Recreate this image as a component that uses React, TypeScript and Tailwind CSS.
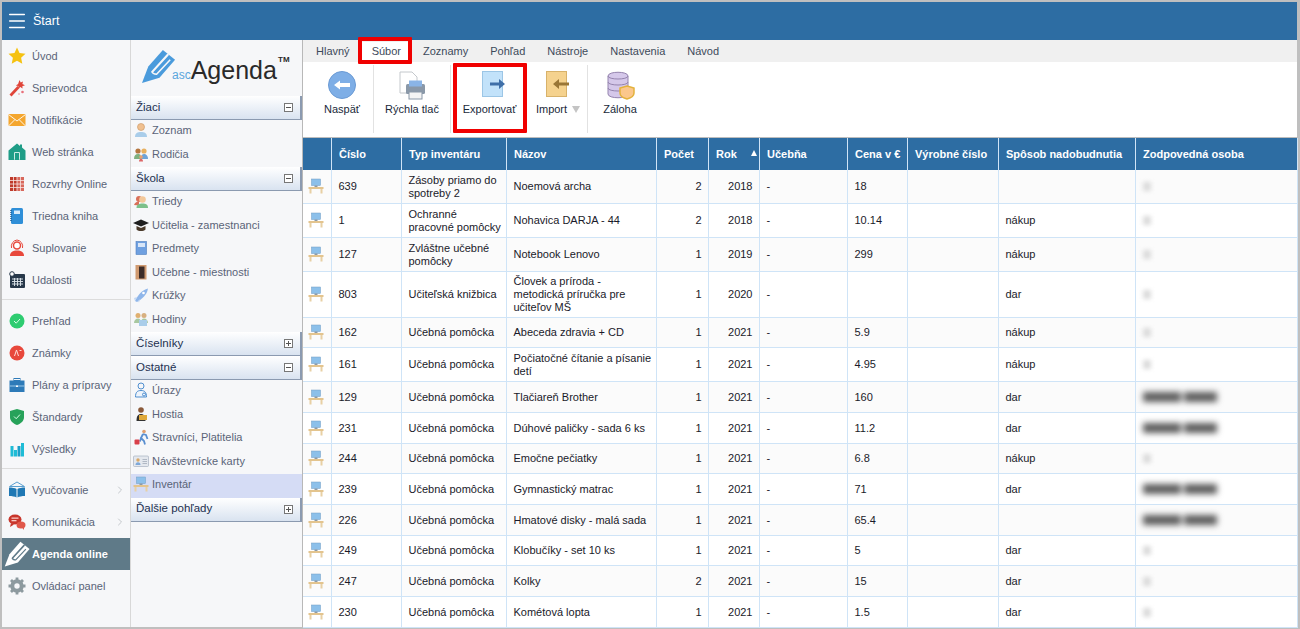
import React from 'react';
import { ChevronRight, Menu } from 'lucide-react';

const font = "font-['Liberation_Sans',Arial,sans-serif]";

function Pencil({ color, cut, className }: { color: string; cut: string; className: string }) {
    return (
        <svg viewBox="0 0 37 37" className={className}>
            <path d="M1 35 L7.500 18 L22.500 1 L35 11 L19 29.500 Z" fill={color} />
            <path d="M12 23 L27.500 6" stroke={cut} strokeWidth="2.200" strokeLinecap="round" />
            <path d="M11 23 Q12 26 16 26 L30 11" stroke={cut} strokeWidth="1.600" fill="none" />
        </svg>
    );
}

const icons: Record<string, React.ReactNode> = {
    star: <path d="M9 .5l2.500 5.500 6 .7-4.400 4 1.200 6L9 13.800l-5.300 2.900 1.200-6-4.400-4 6-.7z" fill="#f5c211" />,
    wand: <g><path d="M1.500 15.500L9.500 7l2 2-8 8.500z" fill="#e0453a" /><path d="M11.500 1l1.200 2.500 2.300-1-.6 2.600 2.600 1.100-2.700 1 .3 2.300-2.300-1.500-1.800 1.600-.2-2.600-2.500-.6 2.300-1.400z" fill="#e0453a" /><circle cx="14.500" cy="13" r="1.300" fill="#e8707a" /><circle cx="11" cy="15" r=".7" fill="#e8707a" /></g>,
    mail: <g><rect x=".5" y="3" width="17" height="12" fill="#f4a62e" /><path d="M.5 3.500l8.500 6.500 8.500-6.500M.5 15l6.500-6.500M17.500 15L11 8.500" stroke="#fff" strokeWidth=".9" fill="none" /></g>,
    home: <g><path d="M9 .5l3 2.500V1.500h2v3l3.500 3V17H.5V7.500z" fill="#1f9d87" /><rect x="6" y="9" width="6" height="8" rx="1" fill="#cdeae4" /><rect x="7" y="10" width="4" height="7" fill="#1f9d87" /></g>,
    grid: <g><rect x="2" y="2" width="7" height="14" fill="#bf3a2b" /><rect x="9" y="2" width="7" height="14" fill="#d8685c" /><path d="M5.500 2v14M9 2v14M12.500 2v14M2 5.500h14M2 9h14M2 12.500h14" stroke="#f8e6e3" strokeWidth=".8" /></g>,
    book: <g><rect x="3" y="1" width="12" height="16" rx="1.500" fill="#2f8fd8" /><rect x="6" y="3.500" width="6" height="3.500" fill="#d8ecfb" /><path d="M3 3v12" stroke="#1c5f96" strokeWidth="1.500" strokeDasharray="1 1" /></g>,
    sub: <g><circle cx="9" cy="6.500" r="3.500" fill="#fff" stroke="#e8483c" strokeWidth="1.500" /><path d="M2 17c0-4 3-5.500 7-5.500s7 1.500 7 5.500z" fill="#e8483c" /><path d="M3.500 9A6.500 6.500 0 0 1 9 1a6.500 6.500 0 0 1 5.500 8" stroke="#e8483c" fill="none" /></g>,
    cal: <g><rect x="2" y="3" width="15" height="14" rx="1" fill="#27384a" /><path d="M4 8h11M4 10.500h11M4 13h11M6.500 7v8M9.500 7v8M12.500 7v8" stroke="#dfe6ec" strokeWidth=".9" /><circle cx="4" cy="3" r="2.300" fill="#fff" stroke="#27384a" /></g>,
    ok: <g><circle cx="9" cy="9" r="7.500" fill="#2ecc71" /><path d="M6 9l2.200 2.200L12 7" stroke="#d8ffe6" fill="none" /></g>,
    grade: <g><circle cx="9" cy="9" r="7.500" fill="#e8483c" /><path d="M6.500 12L8.500 6l2 6M11.500 6.500h2" stroke="#ffdcd8" fill="none" /></g>,
    brief: <g><rect x="1.500" y="4.500" width="15" height="11.500" fill="#2d7ab8" /><rect x="6" y="2.500" width="6" height="2" fill="none" stroke="#2d7ab8" /><path d="M1.500 10h15" stroke="#9cc8e8" /><rect x="8" y="9.500" width="2" height="1.500" fill="#fff" /></g>,
    shield: <g><path d="M9 1l7 2v6c0 4-3 6.500-7 8-4-1.500-7-4-7-8V3z" fill="#27a25a" /><path d="M6 8.500l2.200 2.200L12 6.500" stroke="#d8ffe6" fill="none" /></g>,
    bars: <g><rect x="2.500" y="6" width="3" height="10.500" fill="#1ebcd6" /><rect x="6" y="10" width="3" height="6.500" fill="#1ebcd6" /><rect x="9.500" y="6" width="3" height="10.500" fill="#1a9fc9" /><rect x="13" y="3" width="3" height="13.500" fill="#1ebcd6" /></g>,
    open: <g><path d="M9 1l7.500 4.500H1.500z" fill="none" stroke="#5a9fd0" /><path d="M1 6.500c3 0 6 .5 7.500 1.500v8.500C7 15.500 4 15 1 15zM17 6.500c-3 0-6 .5-7.500 1.500v8.500c1.500-1 4.500-1.500 7.500-1.500z" fill="#1f78b4" /></g>,
    chat: <g><ellipse cx="7" cy="6.500" rx="6.500" ry="5" fill="#c8352b" /><path d="M3 10l-1 4 4-2.500z" fill="#c8352b" /><ellipse cx="13" cy="12" rx="4.500" ry="3.500" fill="#e0574a" /><path d="M14 14.500l2 2.500v-3.500z" fill="#e0574a" /><rect x="3.500" y="4.500" width="7" height="1.300" fill="#f7c9c3" /><rect x="3.500" y="7" width="5" height="1.300" fill="#f7c9c3" /></g>,
    gear: <g><circle cx="9" cy="9" r="4.700" fill="none" stroke="#8d9a9f" strokeWidth="4" /><path d="M9 .5v3M9 14.500v3M.5 9h3M14.500 9h3M3 3l2.200 2.200M12.800 12.800L15 15M15 3l-2.200 2.200M5.200 12.800L3 15" stroke="#8d9a9f" strokeWidth="2.800" /></g>,
};

function Icon({ name, className = "w-[18px] h-[18px]" }: { name: string; className?: string }) {
    return <svg viewBox="0 0 18 18" className={className}>{icons[name]}</svg>;
}

const small: Record<string, React.ReactNode> = {
    person: <g><circle cx="8" cy="5" r="3.500" fill="#f0c090" stroke="#c89460" strokeWidth=".6" /><path d="M2 15c0-4 2.500-5 6-5s6 1 6 5z" fill="#a9cdea" /></g>,
    parents: <g><circle cx="5" cy="5" r="2.600" fill="#b5763f" /><path d="M1 13c0-3.500 1.500-5 4-5s3 1 3 5z" fill="#7fb07f" /><circle cx="11" cy="5" r="2.600" fill="#e8b060" /><path d="M8 13c0-3.500 1-5 3-5s4 1.500 4 5z" fill="#6fa3d8" /><circle cx="8" cy="11" r="1.800" fill="#e8a070" /><path d="M6 15.500c0-2 1-2.500 2-2.500s2 .5 2 2.500z" fill="#d66" /></g>,
    class: <g><circle cx="6" cy="6" r="3" fill="#d9705a" /><path d="M1 12c1-3 3-3.500 5-3.500v4z" fill="#d9705a" /><circle cx="9.500" cy="6.500" r="3.300" fill="#f3c89a" /><path d="M3.500 15c0-3.500 2.500-4.500 6-4.500s5.500 1 5.500 4.500z" fill="#7cc08a" /></g>,
    cap: <g><path d="M0 6l8-3.500L16 6l-8 3.500z" fill="#1e1e1e" /><path d="M3.500 9v3.500c2 2 7 2 9 0V9L8 11z" fill="#4a3a2a" /></g>,
    note: <g><rect x="3" y="1.500" width="10.500" height="13" fill="#6fa0e0" stroke="#4f7fbf" strokeWidth=".6" /><rect x="5" y="3" width="7" height="4" fill="#d8e6f8" /></g>,
    door: <g><rect x="2.500" y="1" width="11" height="14.500" fill="#d09a70" /><rect x="6" y="2.500" width="5.500" height="12" fill="#3c2c28" /></g>,
    rocket: <g><path d="M2 14C5 8 9 3 15 1.500 14 8 9 12 4 15z" fill="#8fb6ea" /><path d="M1 11l3-1-2 4zM5 14l2-2-1 3.500z" fill="#c2d8f3" /><circle cx="10.500" cy="6" r="1.300" fill="#fff" /></g>,
    clock: <g><circle cx="5" cy="4.500" r="2.500" fill="#e0b070" /><circle cx="11" cy="4.500" r="2.500" fill="#d8b080" /><path d="M1 12c0-3 2-4.500 4-4.500S8 9 8 12zM8 12c0-3 1-4.500 3-4.500s4 1.500 4 4.500z" fill="#a8c8a0" /><rect x="6" y="9" width="8" height="6" fill="#a9cdea" /></g>,
    injury: <g><circle cx="8" cy="4" r="3" fill="none" stroke="#4f8fd0" /><path d="M2.500 15c0-5 2-6.500 5.500-6.500s5.500 1.500 5.500 6.500z" fill="#eef4fb" stroke="#4f8fd0" /><circle cx="11" cy="12.500" r="1.500" fill="none" stroke="#4f8fd0" /></g>,
    guest: <g><circle cx="8" cy="4" r="2.800" fill="#8a5a3a" /><path d="M3.500 15c0-5 1.500-7 4.500-7s4.500 2 4.500 7z" fill="#333" /><rect x="6" y="9" width="8" height="5" fill="#e0a93a" /></g>,
    walk: <g><circle cx="11" cy="2.500" r="1.800" fill="#e0a070" /><path d="M10 5l3 1 1.500 4M10 5L8 9l3 3 1 3.500M8 9l-1 3.500" stroke="#5a8fd0" strokeWidth="1.800" fill="none" /><rect x="1.500" y="10.500" width="5" height="5" rx="1" fill="#d9404a" /></g>,
    card: <g><rect x=".5" y="3" width="15" height="10.500" rx="1" fill="#e4e8ee" stroke="#a8b2c0" strokeWidth=".7" /><circle cx="5" cy="7" r="1.700" fill="#d8a868" /><path d="M2.500 12c0-2 1-2.800 2.500-2.800s2.500.8 2.500 2.800z" fill="#7fa8d8" /><path d="M9.500 6.500H14M9.500 8.500H14M9.500 10.500H14" stroke="#b0b8c4" /></g>,
    desk: <g><rect x="3.500" y="1" width="9" height="6.500" fill="#8cc0ea" stroke="#6f9cc4" strokeWidth=".5" /><rect x="6.500" y="7.500" width="3" height="1.500" fill="#8a9aa8" /><rect x=".5" y="9" width="15" height="2" fill="#e3c48e" /><rect x="1.500" y="11" width="2" height="4.500" fill="#e8d0a4" /><rect x="12.500" y="11" width="2" height="4.500" fill="#e8d0a4" /></g>,
};

function SmallIcon({ name }: { name: string }) {
    return <svg viewBox="0 0 16 16" className="w-4 h-4 shrink-0">{small[name]}</svg>;
}

function NavItem({ icon, label, chevron, active }: { icon: React.ReactNode; label: string; chevron?: boolean; active?: boolean }) {
    return (
        <div className={`h-8 flex items-center text-[11px] leading-[13px] ${active ? "bg-[#5f7a88] text-white font-bold" : "text-[#5a6478]"}`}>
            <div className="w-[30px] flex justify-center shrink-0">{icon}</div>
            <span className="flex-1 whitespace-nowrap">{label}</span>
            {chevron && <ChevronRight className="w-[12px] h-[12px] text-[#c4c8cc] mr-[4px]" />}
        </div>
    );
}

function SectionHead({ label, open }: { label: string; open?: boolean }) {
    return (
        <div className="h-[24px] flex items-center justify-between pl-[5px] pr-[7px] bg-gradient-to-b from-white to-[#d9e3f0] border-b border-b-[#8b9ab0] border-r-2 border-r-[#8b9ab0] text-[11.500px] text-[#1d3050]">
            <span>{label}</span>
            <span className="w-[9px] h-[9px] border border-[#777] bg-white flex items-center justify-center relative">
                <span className="w-[5px] h-px bg-[#555]" />
                {!open && <span className="absolute w-px h-[5px] bg-[#555]" />}
            </span>
        </div>
    );
}

function SubItem({ icon, label, active }: { icon: string; label: string; active?: boolean }) {
    return (
        <div className={`h-[23.500px] flex items-center gap-[3px] pl-[2px] pb-[3px] text-[11px] text-[#5a6478] ${active ? "bg-[#d5dcf5]" : ""}`}>
            <span className="w-4 flex justify-center"><SmallIcon name={icon} /></span>
            <span className="whitespace-nowrap">{label}</span>
        </div>
    );
}

function RibbonBtn({ icon, label, arrow, className }: { icon: React.ReactNode; label: string; arrow?: boolean; className: string }) {
    return (
        <div className={`flex flex-col items-center pt-[9px] ${className}`}>
            <div className="h-[30px] flex items-start justify-center">{icon}</div>
            <div className="flex items-center gap-[5px] whitespace-nowrap text-[11px] text-[#1a2a3a] leading-[16px]">
                {label}
                {arrow && <span className="w-0 h-0 border-x-[4px] border-x-transparent border-t-[7px] border-t-[#c4c4c4]" />}
            </div>
        </div>
    );
}

const Sep = () => <div className="w-px h-[68px] mt-[3px] bg-[#e2e2e2] shrink-0" />;

type Row = { h: string; no: string; type: string; name: string; cnt: string; year: string; price: string; how: string; person: number };

const rows: Row[] = [
    { h: "h-[33px]", no: "639", type: "Zásoby priamo do spotreby 2", name: "Noemová archa", cnt: "2", year: "2018", price: "18", how: "", person: 0 },
    { h: "h-[34px]", no: "1", type: "Ochranné pracovné pomôcky", name: "Nohavica DARJA - 44", cnt: "2", year: "2018", price: "10.14", how: "nákup", person: 0 },
    { h: "h-[34px]", no: "127", type: "Zvláštne učebné pomôcky", name: "Notebook Lenovo", cnt: "1", year: "2019", price: "299", how: "nákup", person: 0 },
    { h: "h-[46px]", no: "803", type: "Učiteľská knižbica", name: "Človek a príroda -\nmetodická príručka pre\nučiteľov MŠ", cnt: "1", year: "2020", price: "", how: "dar", person: 0 },
    { h: "h-[30px]", no: "162", type: "Učebná pomôcka", name: "Abeceda zdravia + CD", cnt: "1", year: "2021", price: "5.9", how: "nákup", person: 0 },
    { h: "h-[34px]", no: "161", type: "Učebná pomôcka", name: "Počiatočné čítanie a písanie detí", cnt: "1", year: "2021", price: "4.95", how: "nákup", person: 0 },
    { h: "h-[31px]", no: "129", type: "Učebná pomôcka", name: "Tlačiareň Brother", cnt: "1", year: "2021", price: "160", how: "dar", person: 1 },
    { h: "h-[31px]", no: "231", type: "Učebná pomôcka", name: "Dúhové paličky - sada 6 ks", cnt: "1", year: "2021", price: "11.2", how: "dar", person: 1 },
    { h: "h-[30px]", no: "244", type: "Učebná pomôcka", name: "Emočne pečiatky", cnt: "1", year: "2021", price: "6.8", how: "nákup", person: 0 },
    { h: "h-[31px]", no: "239", type: "Učebná pomôcka", name: "Gymnastický matrac", cnt: "1", year: "2021", price: "71", how: "dar", person: 1 },
    { h: "h-[31px]", no: "226", type: "Učebná pomôcka", name: "Hmatové disky - malá sada", cnt: "1", year: "2021", price: "65.4", how: "", person: 1 },
    { h: "h-[30px]", no: "249", type: "Učebná pomôcka", name: "Klobučíky - set 10 ks", cnt: "1", year: "2021", price: "5", how: "dar", person: 0 },
    { h: "h-[31px]", no: "247", type: "Učebná pomôcka", name: "Kolky", cnt: "2", year: "2021", price: "15", how: "dar", person: 0 },
    { h: "h-[31px]", no: "230", type: "Učebná pomôcka", name: "Kométová lopta", cnt: "1", year: "2021", price: "1.5", how: "dar", person: 0 },
];

const heads = ["", "Číslo", "Typ inventáru", "Názov", "Počet", "Rok", "Učebňa", "Cena v €", "Výrobné číslo", "Spôsob nadobudnutia", "Zodpovedná osoba"];
const widths = ["w-[28px]", "w-[70px]", "w-[105px]", "w-[150px]", "w-[52px]", "w-[51px]", "w-[88px]", "w-[60px]", "w-[91px]", "w-[137px]", "w-[162px]"];

const td = "border-b border-r border-[#cfe4f7] pl-[7px] pr-[1px] pt-[1px] align-middle leading-[13px]";

export default function App() {
    return (
        <div className={`w-[1300px] h-[629px] overflow-hidden bg-[#bfbfbf] pl-[2px] pr-[3px] pt-[2px] pb-[2px] flex flex-col ${font}`}>
            <div className="h-[38px] shrink-0 bg-[#2d6da3] flex items-center text-white">
                <Menu className="w-[22px] h-[22px] ml-[4px]" strokeWidth={1.6} />
                <span className="ml-[5px] text-[12.500px]">Štart</span>
            </div>
            <div className="flex flex-1 min-h-0">
                <div className="w-[129px] shrink-0 bg-[#f6f7f9] border-r border-[#d8d8d8]">
                    <NavItem icon={<Icon name="star" />} label="Úvod" />
                    <NavItem icon={<Icon name="wand" />} label="Sprievodca" />
                    <NavItem icon={<Icon name="mail" />} label="Notifikácie" />
                    <NavItem icon={<Icon name="home" />} label="Web stránka" />
                    <NavItem icon={<Icon name="grid" />} label="Rozvrhy Online" />
                    <NavItem icon={<Icon name="book" />} label="Triedna kniha" />
                    <NavItem icon={<Icon name="sub" />} label="Suplovanie" />
                    <NavItem icon={<Icon name="cal" />} label="Udalosti" />
                    <div className="h-px bg-[#dcdcdc] mt-[3px] mb-[5px]" />
                    <NavItem icon={<Icon name="ok" />} label="Prehľad" />
                    <NavItem icon={<Icon name="grade" />} label="Známky" />
                    <NavItem icon={<Icon name="brief" />} label="Plány a prípravy" />
                    <NavItem icon={<Icon name="shield" />} label="Štandardy" />
                    <NavItem icon={<Icon name="bars" />} label="Výsledky" />
                    <div className="h-px bg-[#dcdcdc] mt-[3px] mb-[5px]" />
                    <NavItem icon={<Icon name="open" />} label="Vyučovanie" chevron />
                    <NavItem icon={<Icon name="chat" />} label="Komunikácia" chevron />
                    <NavItem icon={<Pencil color="#fff" cut="#5f7a88" className="w-[27px] h-[27px]" />} label="Agenda online" active />
                    <NavItem icon={<Icon name="gear" />} label="Ovládací panel" />
                </div>
                <div className="w-[172px] shrink-0 bg-[#f6f7f9] border-r border-[#b8b8b8]">
                    <div className="h-[56px] flex items-end pl-[10px] pb-[12px] relative">
                        <Pencil color="#4a9bdc" cut="#f6f7f9" className="w-[36px] h-[36px] shrink-0 -mb-[1px]" />
                        <span className="text-[12px] text-[#5aa5dd] -ml-[5px] leading-[18px]">asc</span>
                        <span className="text-[25px] leading-[28px] text-[#2a2a2a]">Agenda</span>
                        <span className="absolute left-[147px] top-[16px] text-[8px] font-bold leading-none text-[#2a2a2a]">TM</span>
                    </div>
                    <SectionHead label="Žiaci" open />
                    <SubItem icon="person" label="Zoznam" />
                    <SubItem icon="parents" label="Rodičia" />
                    <SectionHead label="Škola" open />
                    <SubItem icon="class" label="Triedy" />
                    <SubItem icon="cap" label="Učitelia - zamestnanci" />
                    <SubItem icon="note" label="Predmety" />
                    <SubItem icon="door" label="Učebne - miestnosti" />
                    <SubItem icon="rocket" label="Krúžky" />
                    <SubItem icon="clock" label="Hodiny" />
                    <SectionHead label="Číselníky" />
                    <SectionHead label="Ostatné" open />
                    <SubItem icon="injury" label="Úrazy" />
                    <SubItem icon="guest" label="Hostia" />
                    <SubItem icon="walk" label="Stravníci, Platitelia" />
                    <SubItem icon="card" label="Návštevnícke karty" />
                    <SubItem icon="desk" label="Inventár" active />
                    <SectionHead label="Ďalšie pohľady" />
                </div>
                <div className="flex-1 min-w-0 flex flex-col relative">
                    <div className="h-[22px] shrink-0 bg-[#f0f0f0] flex items-end pl-[2px] text-[11px] text-[#3d4a5a]">
                        {["Hlavný", "Súbor", "Zoznamy", "Pohľad", "Nástroje", "Nastavenia", "Návod"].map((t) => (
                            <div key={t} className={`h-[20px] px-[11px] leading-[19px] ${t === "Súbor" ? "bg-white" : ""}`}>{t}</div>
                        ))}
                    </div>
                    <div className="h-[76px] shrink-0 bg-white border-b border-[#bdbdbd] flex">
                        <RibbonBtn className="w-[70px] pl-[8px]" label="Naspäť" icon={
                            <svg viewBox="0 0 28 28" className="w-[28px] h-[28px]">
                                <circle cx="14" cy="14" r="13.500" fill="#7eaee6" stroke="#6a9ad4" />
                                <path d="M6 14l6-4.500V12h10v4H12v2.500z" fill="#fff" />
                            </svg>
                        } />
                        <Sep />
                        <RibbonBtn className="w-[76px]" label="Rýchla tlač" icon={
                            <svg viewBox="0 0 30 30" className="w-[30px] h-[30px]">
                                <path d="M3 1h12l5 5v16H3z" fill="#fff" stroke="#c4c8cc" />
                                <rect x="9" y="13" width="19" height="10" rx="1.500" fill="#8a98a8" />
                                <rect x="12" y="9.500" width="13" height="6" fill="#8ab4e6" />
                                <rect x="12" y="21" width="13" height="7" fill="#f4f4f4" stroke="#8a98a8" />
                            </svg>
                        } />
                        <Sep />
                        <RibbonBtn className="w-[77px]" label="Exportovať" icon={
                            <svg viewBox="0 0 24 26" className="w-[24px] h-[26px] ml-[9px]">
                                <rect x=".500" y=".500" width="20" height="25" fill="#c2e2fa" stroke="#9cc6e6" />
                                <path d="M8 11.500h9V8l6 5-6 5v-3.500H8z" fill="#3f6fa8" />
                            </svg>
                        } />
                        <RibbonBtn className="w-[59px] pl-[1px]" label="Import" arrow icon={
                            <svg viewBox="0 0 24 26" className="w-[24px] h-[26px]">
                                <rect x=".500" y=".500" width="20" height="25" fill="#f5d28e" stroke="#d8b26a" />
                                <path d="M23 11.500H13V8l-6 5 6 5v-3.500h10z" fill="#9a7636" />
                            </svg>
                        } />
                        <Sep />
                        <RibbonBtn className="w-[64px]" label="Záloha" icon={
                            <svg viewBox="0 0 30 30" className="w-[30px] h-[30px] ml-[1px]">
                                <path d="M2 5c0-5 20-5 20 0v18c0 5-20 5-20 0z" fill="#d5c8ea" stroke="#9584ae" />
                                <path d="M2 5c0 4 20 4 20 0M2 11c0 4 20 4 20 0M2 17c0 4 20 4 20 0" fill="none" stroke="#9584ae" />
                                <path d="M21 15l7 2v5c0 3-3 5-7 6-4-1-7-3-7-6v-5z" fill="#fbc78c" stroke="#e3b23c" strokeWidth="1.500" />
                            </svg>
                        } />
                    </div>
                    <table className="table-fixed border-collapse w-[994px] text-[11px] text-[#1a1a2a]">
                        <thead>
                            <tr className="h-[32px] bg-[#2d6da3] text-white">
                                {heads.map((h, i) => (
                                    <th key={i} className={`${widths[i]} border-r border-[#cfe4f7] pl-[7.500px] pr-0 pt-[1px] text-left font-bold whitespace-nowrap relative`}>
                                        {h}
                                        {h === "Rok" && <span className="absolute right-[2px] top-[12px] w-0 h-0 border-x-[3.500px] border-x-transparent border-b-[6px] border-b-white" />}
                                    </th>
                                ))}
                            </tr>
                        </thead>
                        <tbody>
                            {rows.map((r, i) => (
                                <tr key={r.no} className={`${r.h} ${i % 2 === 0 ? "bg-[#fbfbfb]" : "bg-white"}`}>
                                    <td className="border-b border-r border-[#cfe4f7] pl-[5px]"><SmallIcon name="desk" /></td>
                                    <td className={td}>{r.no}</td>
                                    <td className={td}>{r.type}</td>
                                    <td className={`${td} whitespace-pre-line`}>{r.name}</td>
                                    <td className={`${td} text-right !pr-[6px]`}>{r.cnt}</td>
                                    <td className={`${td} text-right !pr-[6px]`}>{r.year}</td>
                                    <td className={td}>-</td>
                                    <td className={td}>{r.price}</td>
                                    <td className={td}></td>
                                    <td className={td}>{r.how}</td>
                                    <td className={td}>
                                        {r.person ? (
                                            <div className="flex gap-[3px] blur-[3px]">
                                                <div className="w-[38px] h-[10px] bg-[#5c5c5c]" />
                                                <div className="w-[33px] h-[10px] bg-[#5c5c5c]" />
                                            </div>
                                        ) : (
                                            <div className="w-[8px] h-[9px] bg-[#dcdcdc] blur-[2px]" />
                                        )}
                                    </td>
                                </tr>
                            ))}
                        </tbody>
                    </table>
                    <div className="absolute left-[55px] top-[-3px] w-[54px] h-[27px] border-[4px] border-[#f00000] rounded-[1px]" />
                    <div className="absolute left-[150px] top-[23px] w-[74px] h-[70px] border-[4px] border-[#f00000] rounded-[1px]" />
                </div>
            </div>
        </div>
    );
}
